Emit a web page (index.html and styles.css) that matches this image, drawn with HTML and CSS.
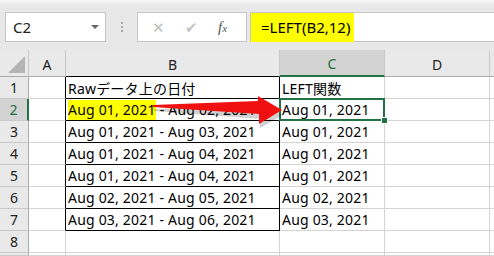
FILE: index.html
```html
<!DOCTYPE html>
<html>
<head>
    <title>LEFT関数</title>
    <link rel="stylesheet" href="styles.css">
</head>
<body>
    <div class="formula-bar">
        <div class="name-box">
            <span>C2</span>
            <span class="drop"></span>
        </div>
        <div class="grip"><i></i><i></i><i></i></div>
        <div class="fx-box">
            <span class="btn">&#x2715;</span>
            <span class="btn check">&#x2714;</span>
            <span class="fx">f<sub>x</sub></span>
        </div>
        <div class="formula"><span class="mark">=LEFT(B2,12)</span></div>
    </div>

    <div class="sheet">
        <div class="hd corner"><span class="tri"></span></div>
        <div class="hd">A</div>
        <div class="hd hb">B</div>
        <div class="hd sel-col">C</div>
        <div class="hd">D</div>
        <div class="hd end"></div>

        <div class="rh">1</div><div class="c ab"></div><div class="c b">Rawデータ上の日付</div><div class="c">LEFT関数</div><div class="c"></div><div class="c end"></div>
        <div class="rh sel-row">2</div><div class="c ab"></div><div class="c b"><span class="mark">Aug 01, 2021</span> - Aug 02, 2021</div><div class="c active">Aug 01, 2021</div><div class="c"></div><div class="c end"></div>
        <div class="rh">3</div><div class="c ab"></div><div class="c b">Aug 01, 2021 - Aug 03, 2021</div><div class="c">Aug 01, 2021</div><div class="c"></div><div class="c end"></div>
        <div class="rh">4</div><div class="c ab"></div><div class="c b">Aug 01, 2021 - Aug 04, 2021</div><div class="c">Aug 01, 2021</div><div class="c"></div><div class="c end"></div>
        <div class="rh">5</div><div class="c ab"></div><div class="c b">Aug 01, 2021 - Aug 04, 2021</div><div class="c">Aug 01, 2021</div><div class="c"></div><div class="c end"></div>
        <div class="rh">6</div><div class="c ab"></div><div class="c b">Aug 02, 2021 - Aug 05, 2021</div><div class="c">Aug 02, 2021</div><div class="c"></div><div class="c end"></div>
        <div class="rh">7</div><div class="c ab"></div><div class="c b">Aug 03, 2021 - Aug 06, 2021</div><div class="c">Aug 03, 2021</div><div class="c"></div><div class="c end"></div>
        <div class="rh">8</div><div class="c"></div><div class="c"></div><div class="c"></div><div class="c"></div><div class="c end"></div>
        <div class="rh"></div><div class="c"></div><div class="c"></div><div class="c"></div><div class="c"></div><div class="c end"></div>
    </div>

    <svg class="arrow" width="494" height="256" viewBox="0 0 494 256">
        <polygon points="153,106 258,102 258,98 282,112 259,125 259,116 153,108" fill="#000" opacity="0.18" transform="translate(1,3)"/>
        <polygon points="153,105 258,101 258,96 282,110 259,124 259,114 153,107" fill="#f01010"/>
    </svg>
</body>
</html>
```

FILE: styles.css
```css
body { margin: 0; width: 494px; height: 256px; overflow: hidden; position: relative; background: #fff; font-family: "Noto Sans", "Noto Sans CJK JP", sans-serif; color: #000; }

.formula-bar { height: 50px; box-sizing: border-box; padding-top: 12px; display: flex; align-items: flex-start; background: linear-gradient(#f7f7f7, #e8e8e8 6px); }
.name-box { margin-left: 5px; width: 101px; height: 30px; box-sizing: border-box; border: 1px solid #c6c6c6; background: #fff; display: flex; align-items: center; justify-content: space-between; padding: 0 6px 0 7px; font-size: 15px; color: #222; }
.drop { width: 0; height: 0; border-left: 4px solid transparent; border-right: 4px solid transparent; border-top: 4px solid #666; }
.grip { width: 31px; height: 30px; display: flex; flex-direction: column; align-items: center; justify-content: center; gap: 2px; }
.grip i { width: 2px; height: 2px; background: #a8a8a8; }
.fx-box { width: 110px; height: 30px; box-sizing: border-box; border: 1px solid #c6c6c6; background: #fff; display: flex; align-items: center; padding-left: 14px; }
.btn { width: 33px; color: #bdbdbd; font-size: 15px; }
.check { color: #c4c4c4; }
.fx { font-family: "Liberation Serif", serif; font-style: italic; font-size: 15px; color: #555; }
.fx sub { font-size: 11px; vertical-align: 0; }
.formula { margin-left: 3px; flex: 1; height: 30px; box-sizing: border-box; border: 1px solid #c6c6c6; border-right: none; background: #fff; }
.formula .mark { display: inline-block; height: 29px; line-height: 29px; padding: 0 4px 0 10px; font-size: 15px; }

.mark { background: #ffff00; }

.sheet { display: grid; grid-template-columns: 29px 37px 214px 105px 105px 1fr; grid-template-rows: 27px repeat(8, 22px) 3px; font-size: 14px; }
.sheet > div { box-sizing: border-box; border-right: 1px solid #d4d4d4; border-bottom: 1px solid #d4d4d4; white-space: nowrap; overflow: hidden; }

.hd { background: #e9e9e9; display: flex; align-items: center; justify-content: center; color: #222; border-right-color: #c8c8c8 !important; border-bottom-color: #ababab !important; padding-top: 2px; }
.corner { position: relative; }
.tri { position: absolute; right: 3px; bottom: 3px; width: 0; height: 0; border-left: 17px solid transparent; border-bottom: 17px solid #b5b5b5; }
.hd.end { border-right: none !important; }
.hd.hb { border-bottom-color: #000 !important; }
.sel-col { background: #d3d3d3; color: #1d6b3f; border-bottom: 2px solid #217346 !important; }

.rh { background: #e9e9e9; display: flex; align-items: center; justify-content: center; color: #222; border-right-color: #ababab !important; border-bottom-color: #c8c8c8 !important; }
.sel-row { background: #d3d3d3; color: #1d6b3f; border-right: 2px solid #217346 !important; }

.c { display: flex; align-items: center; padding-left: 2px; letter-spacing: 0.2px; }
.c.end { border-right: none !important; }
.ab { border-right-color: #000 !important; }
.b { border-right-color: #000 !important; border-bottom-color: #000 !important; }
.b .mark { display: inline-block; height: 20px; line-height: 20px; margin-right: 4px; }

.active { position: relative; overflow: visible !important; }
.active::after { content: ""; position: absolute; left: -1px; top: -1px; right: -1px; bottom: -1px; border: 2px solid #217346; }
.active::before { content: ""; position: absolute; right: -4px; bottom: -4px; width: 5px; height: 5px; background: #217346; border: 1px solid #fff; z-index: 2; }

.arrow { position: absolute; left: 0; top: 0; pointer-events: none; }
```
